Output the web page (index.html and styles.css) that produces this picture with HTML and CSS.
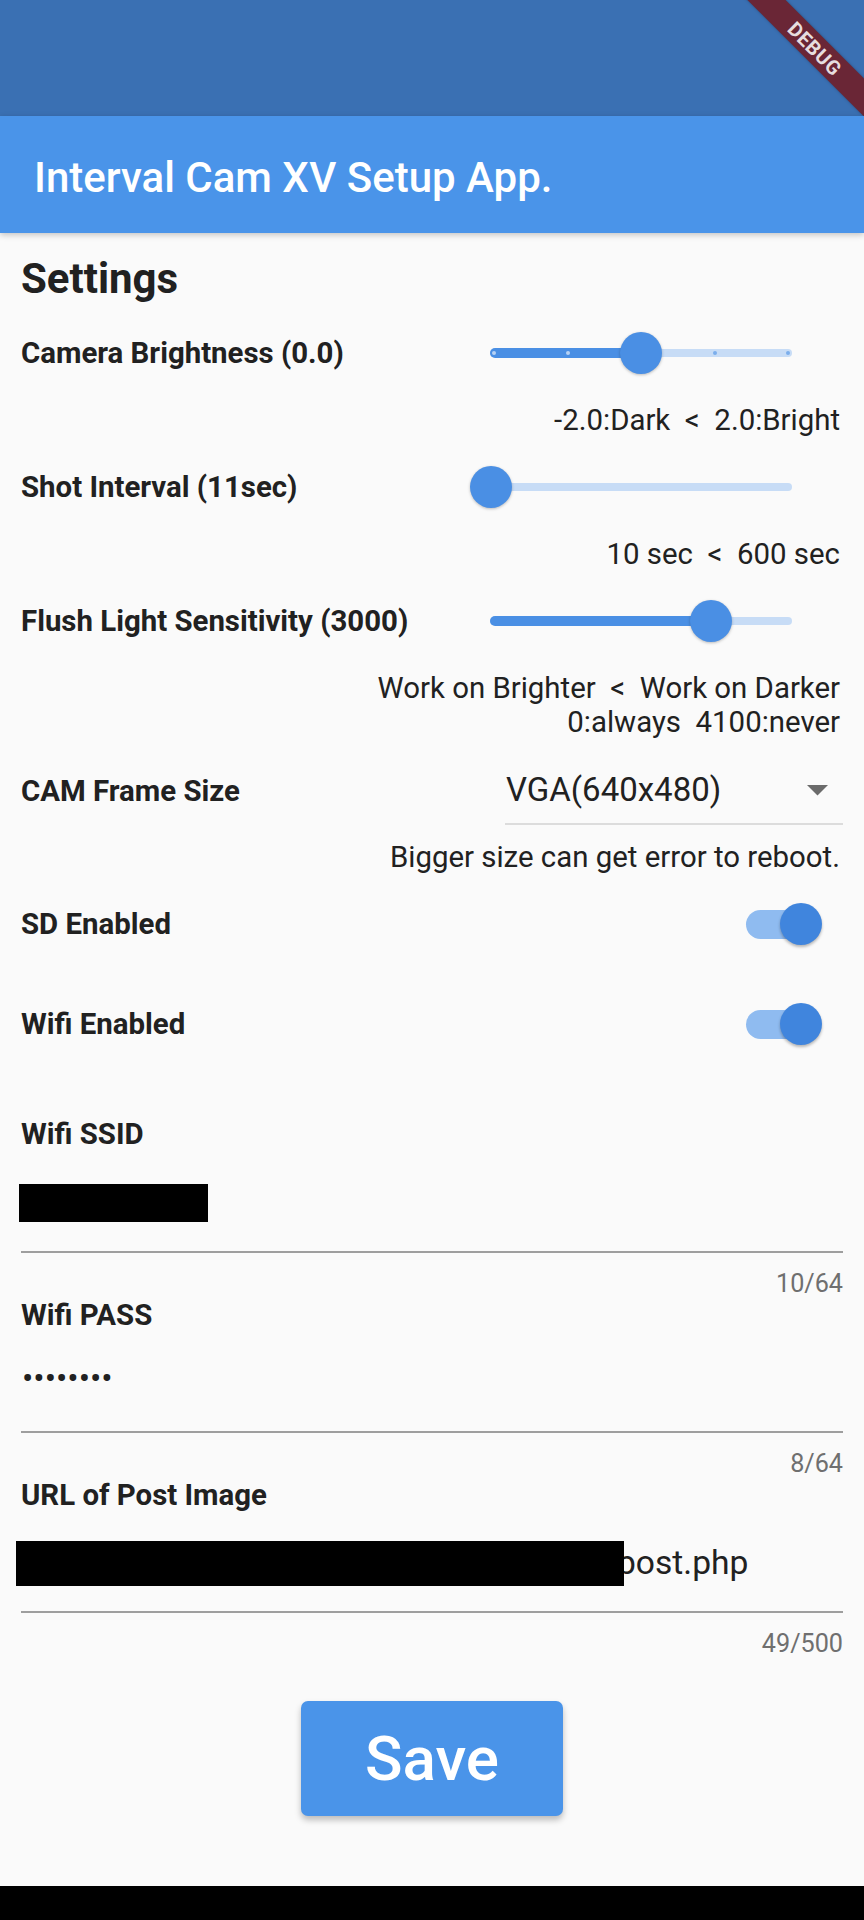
FILE: index.html
```html
<!DOCTYPE html>
<html lang="en">
<head>
<meta charset="utf-8">
<title>Interval Cam XV Setup App.</title>
<link rel="stylesheet" href="styles.css">
</head>
<body>
<div class="screen">
  <div class="statusbar"></div>
  <header class="appbar">
    <h1 class="appbar-title">Interval Cam XV Setup App.</h1>
  </header>

  <main class="content">
    <h2 class="heading">Settings</h2>

    <div class="row slider-row">
      <span class="label">Camera Brightness (0.0)</span>
      <div class="slider">
        <div class="track"></div>
        <div class="track-active" style="width:151px"></div>
        <span class="tick tick-on" style="left:4px"></span>
        <span class="tick tick-on" style="left:77.5px"></span>
        <span class="tick tick-off" style="left:224.5px"></span>
        <span class="tick tick-off" style="left:298px"></span>
        <span class="thumb" style="left:151px"></span>
      </div>
    </div>
    <p class="hint">-2.0:Dark  &lt;  2.0:Bright</p>

    <div class="row slider-row">
      <span class="label">Shot Interval (11sec)</span>
      <div class="slider">
        <div class="track"></div>
        <div class="track-active" style="width:1px"></div>
        <span class="thumb" style="left:0.5px"></span>
      </div>
    </div>
    <p class="hint">10 sec  &lt;  600 sec</p>

    <div class="row slider-row">
      <span class="label">Flush Light Sensitivity (3000)</span>
      <div class="slider">
        <div class="track"></div>
        <div class="track-active" style="width:221px"></div>
        <span class="thumb" style="left:221px"></span>
      </div>
    </div>
    <p class="hint">Work on Brighter  &lt;  Work on Darker<br>0:always  4100:never</p>

    <div class="row dropdown-row">
      <span class="label">CAM Frame Size</span>
      <div class="dropdown">
        <span class="dropdown-value">VGA(640x480)</span>
        <svg class="dropdown-arrow" width="21" height="11" viewBox="0 0 21 11"><polygon points="0,0 21,0 10.5,10.5" fill="#6b6b6b"/></svg>
      </div>
    </div>
    <p class="hint hint-gap">Bigger size can get error to reboot.</p>

    <div class="row switch-row">
      <span class="label">SD Enabled</span>
      <div class="switch"><span class="switch-thumb"></span></div>
    </div>
    <div class="row switch-row">
      <span class="label">Wifi Enabled</span>
      <div class="switch"><span class="switch-thumb"></span></div>
    </div>

    <div class="field-label field-label-first label">Wifi SSID</div>
    <div class="field field-ssid">
      <span class="redact redact-ssid"></span>
    </div>
    <div class="counter">10/64</div>

    <div class="field-label label">Wifi PASS</div>
    <div class="field field-pass">
      <span class="field-text dots">••••••••</span>
    </div>
    <div class="counter">8/64</div>

    <div class="field-label label">URL of Post Image</div>
    <div class="field field-url">
      <span class="redact redact-url"></span><span class="field-text">post.php</span>
    </div>
    <div class="counter">49/500</div>

    <button class="save-btn" type="button">Save</button>
  </main>

  <div class="navbar"></div>

  <div class="debug-banner"><span>DEBUG</span></div>
</div>
</body>
</html>
```

FILE: styles.css
```css
* { box-sizing: border-box; }

html, body {
  margin: 0;
  padding: 0;
  background: #fafafa;
}

body {
  font-family: Roboto, "Liberation Sans", sans-serif;
  color: #212121;
}

.screen {
  position: relative;
  width: 864px;
  height: 1920px;
  overflow: hidden;
  display: flex;
  flex-direction: column;
  background: #fafafa;
}

.statusbar {
  height: 116px;
  flex: none;
  background: #3a70b3;
}

.appbar {
  height: 117px;
  flex: none;
  background: #4a94e9;
  display: flex;
  align-items: center;
  padding: 6px 0 0 34px;
  box-shadow: 0 2px 6px rgba(0, 0, 0, 0.22);
  position: relative;
  z-index: 1;
}

.appbar-title {
  margin: 0;
  font-size: 42px;
  font-weight: 500;
  line-height: 50px;
  color: #ffffff;
}

.content {
  flex: 1;
  display: flex;
  flex-direction: column;
  padding: 0 21px;
}

.heading {
  margin: 0;
  padding-top: 22px;
  font-size: 42px;
  font-weight: 700;
  line-height: 48px;
}

.label {
  font-size: 29.4px;
  font-weight: 700;
  line-height: 40px;
  color: #212121;
}

.row {
  display: flex;
  justify-content: space-between;
}

.slider-row {
  height: 100px;
  align-items: center;
}

.slider {
  position: relative;
  width: 302px;
  height: 8px;
  margin-right: 51px;
}

.track {
  position: absolute;
  left: 0;
  top: 0;
  width: 100%;
  height: 8px;
  border-radius: 4px;
  background: #c7dcf6;
}

.track-active {
  position: absolute;
  left: 0;
  top: -1px;
  height: 10px;
  border-radius: 5px;
  background: #4a8fe4;
}

.tick {
  position: absolute;
  top: 2px;
  width: 4px;
  height: 4px;
  margin-left: -2px;
  border-radius: 50%;
}

.tick-on { background: rgba(255, 255, 255, 0.6); }
.tick-off { background: rgba(74, 143, 228, 0.6); }

.thumb {
  position: absolute;
  top: -17px;
  width: 42px;
  height: 42px;
  margin-left: -21px;
  border-radius: 50%;
  background: #4a8fe4;
  box-shadow: 0 1px 3px rgba(0, 0, 0, 0.25);
}

.hint {
  margin: 0;
  padding-right: 3px;
  font-size: 29.4px;
  line-height: 34px;
  text-align: right;
  white-space: pre;
  color: #212121;
}

.hint-gap { padding-top: 15px; }

.dropdown-row {
  align-items: baseline;
}

.dropdown {
  width: 338px;
  display: flex;
  align-items: center;
  justify-content: space-between;
  padding: 29px 15px 11px 1px;
  border-bottom: 2px solid #dcdcdc;
}

.dropdown-value {
  font-size: 33px;
  line-height: 44px;
  color: #212121;
}

.dropdown-arrow { display: block; }

.switch-row {
  height: 100px;
  align-items: center;
}

.switch {
  position: relative;
  width: 70px;
  height: 29px;
  margin-right: 27px;
  border-radius: 15px;
  background: #8fbbf0;
}

.switch-thumb {
  position: absolute;
  left: 34px;
  top: -6.5px;
  width: 42px;
  height: 42px;
  border-radius: 50%;
  background: #4085dd;
  box-shadow: 0 2px 3px rgba(0, 0, 0, 0.28);
}

.field-label {
  line-height: 36px;
}

.field-label-first { margin-top: 42px; }

.field {
  display: flex;
  align-items: center;
  border-bottom: 2px solid #9e9e9e;
}

.field-ssid { padding: 32px 0 29px; }
.field-pass { padding: 24px 0 30px; }
.field-url { padding: 27px 0 25px; height: 100px; }

.field-text {
  font-size: 33.6px;
  line-height: 44px;
  color: #212121;
}

.dots {
  padding-left: 1px;
  letter-spacing: 0;
}

.redact {
  display: block;
  background: #000000;
}

.redact-ssid {
  width: 189px;
  height: 38px;
  margin-left: -2px;
}

.redact-url {
  position: relative;
  width: 608px;
  height: 45px;
  margin-left: -5px;
  margin-right: -7px;
}

.counter {
  margin-top: 18px;
  font-size: 25.2px;
  line-height: 26px;
  text-align: right;
  color: #6f6f6f;
}

.save-btn {
  align-self: center;
  margin-top: 44px;
  width: 262px;
  height: 115px;
  border: none;
  border-radius: 7px;
  background: #4a94e9;
  color: #ffffff;
  font-family: Roboto, "Liberation Sans", sans-serif;
  font-size: 62px;
  font-weight: 500;
  line-height: 1;
  padding: 0;
  box-shadow: 0 4px 6px rgba(0, 0, 0, 0.25);
}

.navbar {
  height: 34px;
  flex: none;
  background: #000000;
}

.debug-banner {
  position: absolute;
  left: 715px;
  top: 35px;
  width: 200px;
  height: 27px;
  transform: rotate(45deg);
  background: #6a2636;
  display: flex;
  align-items: center;
  justify-content: center;
  box-shadow: 0 0 3px rgba(0, 0, 0, 0.3);
}

.debug-banner span {
  font-family: Roboto, "Liberation Sans", sans-serif;
  font-size: 20px;
  font-weight: 700;
  line-height: 1;
  letter-spacing: 0.5px;
  color: rgba(255, 255, 255, 0.85);
}
```
